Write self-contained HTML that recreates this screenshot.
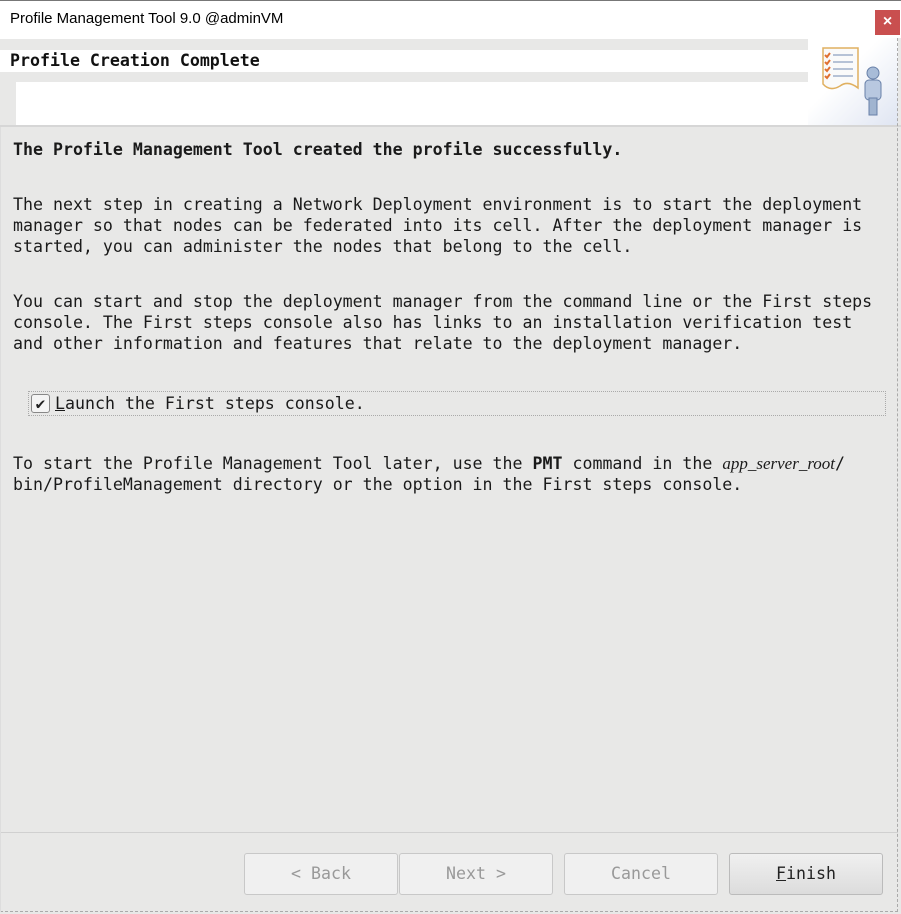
<!DOCTYPE html>
<html><head><style>
*{margin:0;padding:0;box-sizing:border-box}
body{width:901px;height:914px;background:#e8e8e7;position:relative;overflow:hidden;font-family:"DejaVu Sans Mono","Liberation Mono",monospace;font-size:16.6px;color:#1a1a1a}
.abs{position:absolute}
.tb{left:0;top:0;width:901px;height:38px;background:#fff;border-top:1px solid #777;font-family:"Liberation Sans",sans-serif;font-size:15px;color:#000;padding:9px 10px}
.close{left:875px;top:10px;width:25px;height:25px;background:#c94f4f;color:#fff;font-family:"Liberation Sans",sans-serif;font-size:16px;text-align:center;line-height:24px;font-weight:bold}
p{position:absolute;left:13px;line-height:21px;white-space:pre}
.btn{position:absolute;top:853px;width:154px;height:42px;border:1px solid #c8c8c8;border-radius:3px;background:#f0f0f0;text-align:center;line-height:40px;color:#999}
</style></head><body>
<div class="abs tb">Profile Management Tool 9.0 @adminVM</div>
<div class="abs close">×</div>
<div class="abs" style="left:0;top:38px;width:808px;height:87px;background:#fff"></div>
<div class="abs" style="left:0;top:39px;width:808px;height:11px;background:#e8e8e7"></div>
<div class="abs" style="left:0;top:72px;width:808px;height:10px;background:#e8e8e7"></div>
<div class="abs" style="left:0;top:82px;width:16px;height:43px;background:#e8e8e7"></div>
<div class="abs" style="left:10px;top:50px;font-weight:bold;font-size:16.6px;line-height:22px;color:#111">Profile Creation Complete</div>
<div class="abs" style="left:808px;top:38px;width:90px;height:87px;background:linear-gradient(135deg,#fff 40%,#dfe5f2)">
<svg width="90" height="87" viewBox="0 0 90 87">
<path d="M15 10 H50 V50 Q40 42 32 48 Q22 54 15 46 Z" fill="#fafafa" stroke="#e0b060" stroke-width="1.5"/>
<g stroke="#e07030" stroke-width="2" fill="none"><path d="M17 17l2 2 3-4M17 24l2 2 3-4M17 31l2 2 3-4M17 38l2 2 3-4"/></g>
<g stroke="#8ea0c0" stroke-width="1.2"><path d="M25 17h20M25 24h20M25 31h20M25 38h20"/></g>
<circle cx="65" cy="35" r="6" fill="#a8bcd8" stroke="#6880a8"/>
<rect x="57" y="42" width="16" height="20" rx="4" fill="#b8c8e0" stroke="#6880a8"/>
<rect x="61" y="60" width="8" height="17" fill="#a0b4d0" stroke="#6880a8"/>
</svg></div>
<div class="abs" style="left:0;top:125px;width:901px;height:2px;background:#d6d6d6"></div>
<p style="top:139px;font-weight:bold">The Profile Management Tool created the profile successfully.</p>
<p style="top:194px">The next step in creating a Network Deployment environment is to start the deployment
manager so that nodes can be federated into its cell. After the deployment manager is
started, you can administer the nodes that belong to the cell.</p>
<p style="top:291px">You can start and stop the deployment manager from the command line or the First steps
console. The First steps console also has links to an installation verification test
and other information and features that relate to the deployment manager.</p>
<div class="abs" style="left:28px;top:391px;width:858px;height:25px;border:1px dotted #aaa"></div>
<div class="abs" style="left:31px;top:394px;width:19px;height:19px;border:1px solid #888;border-radius:3px;background:#f4f4f4;font-size:16px;line-height:17px;text-align:center;color:#222">✔</div>
<p style="left:55px;top:393px"><u>L</u>aunch the First steps console.</p>
<p style="top:453px">To start the Profile Management Tool later, use the <b>PMT</b> command in the <i style="font-family:'Liberation Serif',serif;font-size:17px">app_server_root</i>/
bin/ProfileManagement directory or the option in the First steps console.</p>
<div class="abs" style="left:0;top:832px;width:898px;height:1px;background:#d0d0d0"></div>
<div class="btn" style="left:244px">&lt; Back</div>
<div class="btn" style="left:399px">Next &gt;</div>
<div class="btn" style="left:564px">Cancel</div>
<div class="btn" style="left:729px;color:#222;background:linear-gradient(#f0f0f0,#dcdcdc);border-color:#bbb"><u>F</u>inish</div>
<div class="abs" style="left:0;top:911px;width:898px;border-top:1px dashed #aaa"></div>
<div class="abs" style="left:897px;top:38px;height:874px;border-left:1px dashed #aaa"></div>
<div class="abs" style="left:0;top:127px;height:785px;border-left:1px solid #ddd"></div>
</body></html>
